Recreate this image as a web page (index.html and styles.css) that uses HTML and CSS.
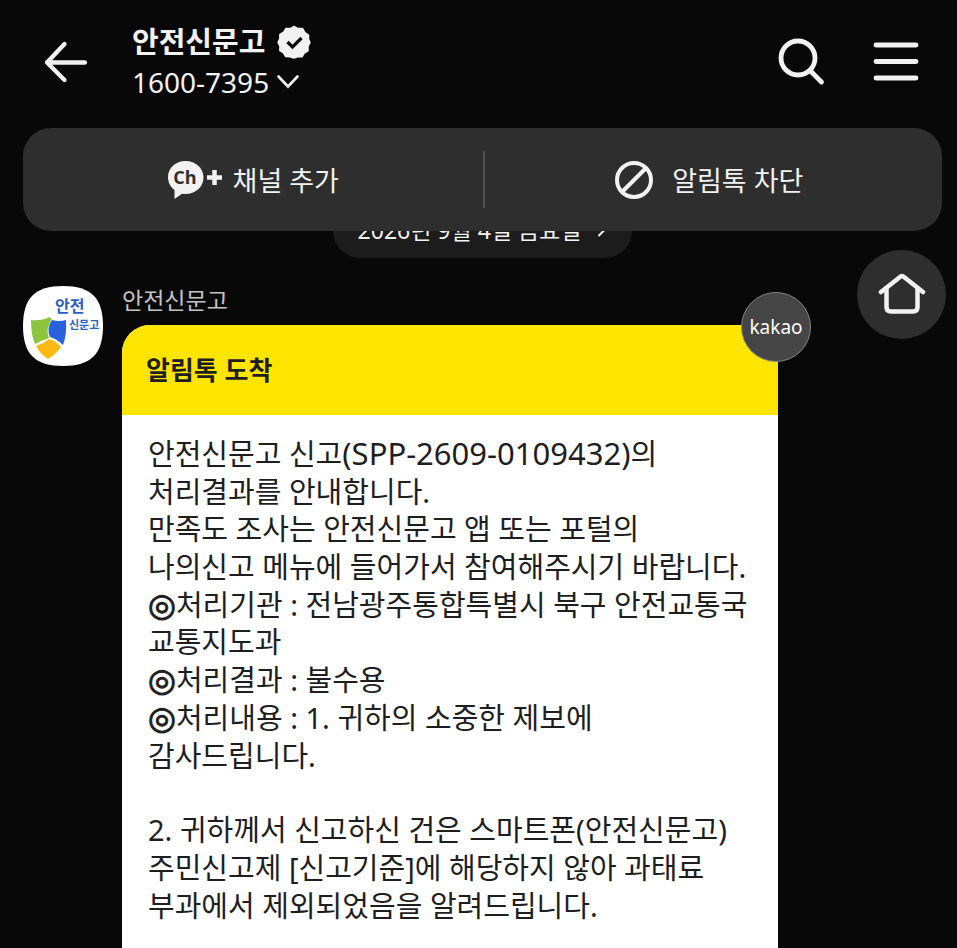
FILE: index.html
```html
<!DOCTYPE html>
<html lang="ko">
<head>
  <meta charset="UTF-8" />
  <meta name="viewport" content="width=device-width, initial-scale=1.0" />
  <title>안전신문고</title>
  <link rel="stylesheet" href="styles.css">
</head>
<body>
  <header class="topbar">
    <button type="button" class="icon-btn" aria-label="뒤로">
      <svg width="44" height="44" viewBox="0 0 44 44" fill="none" stroke="currentColor" stroke-width="4.300" stroke-linecap="round" stroke-linejoin="round">
        <path d="M20.500 4L3 22.500L20.500 40M3 22.500H41" />
      </svg>
    </button>
    <div class="channel">
      <h1>안전신문고
        <svg width="34" height="34" viewBox="0 0 34 34">
          <path d="M17 1.500L21 3.600L25.600 3.600L27.900 7.600L31.500 10L31.500 14.200L33 17.500L31 21.500L31 25.800L27.200 28.200L25 31.800L20.500 31.700L17 33L13 31.700L8.700 31.500L6.500 27.800L2.800 25.500L3 21.200L1 17.500L2.800 13.700L2.900 9.500L6.700 7.200L9 3.500L13.400 3.600Z" fill="currentColor" stroke="currentColor" stroke-width="1.500" stroke-linejoin="round" />
          <path d="M10.500 17L15.500 22L24.500 13" fill="none" stroke="#0a0a0a" stroke-width="3.200" />
        </svg>
      </h1>
      <button type="button" class="phone">1600-7395
        <svg width="22" height="14" viewBox="0 0 22 14" fill="none" stroke="currentColor" stroke-width="2.600" stroke-linecap="round">
          <path d="M1.500 1.500L11 11.500L20.500 1.500" />
        </svg>
      </button>
    </div>
    <div class="tools">
      <button type="button" class="icon-btn" aria-label="검색">
        <svg width="48" height="48" viewBox="0 0 48 48" fill="none" stroke="currentColor" stroke-width="4.800" stroke-linecap="round">
          <circle cx="20" cy="20" r="17" />
          <path d="M32 32.500L43.500 44" />
        </svg>
      </button>
      <button type="button" class="icon-btn" aria-label="메뉴">
        <svg width="46" height="40" viewBox="0 0 46 40" stroke="currentColor" stroke-width="4.800" stroke-linecap="round">
          <path d="M3 3H43M3 19.500H43M3 36H43" />
        </svg>
      </button>
    </div>
  </header>

  <div class="actions">
    <button type="button" class="action add">
      <svg width="56" height="38" viewBox="0 0 56 38">
        <path d="M18.500 0C8.500 0 1 7 1 16C1 21.500 3.500 26 7.500 29V38L15 32.700Q16.700 33 18.500 33C28.500 33 36.500 26 36.500 16.500S28.500 0 18.500 0Z" fill="currentColor" />
        <text x="18" y="23" text-anchor="middle" class="ch">Ch</text>
        <path d="M47.500 9V24M40 16.500H55" stroke="currentColor" stroke-width="4.500" />
      </svg>
      채널 추가
    </button>
    <button type="button" class="action block">
      <svg width="38" height="38" viewBox="0 0 38 38" fill="none" stroke="currentColor" stroke-width="4">
        <circle cx="19" cy="19" r="17" />
        <path d="M7 31L31 7" />
      </svg>
      알림톡 차단
    </button>
  </div>

  <main class="chat">
    <button type="button" class="date">2026년 9월 4일 금요일
      <svg width="10" height="16" viewBox="0 0 10 16" fill="none" stroke="currentColor" stroke-width="2">
        <path d="M1.500 1L8.500 8L1.500 15" />
      </svg>
    </button>

    <article class="message">
      <svg class="avatar" width="80" height="80" viewBox="0 0 80 80" role="img" aria-label="안전신문고">
        <path d="M40 0C68 0 80 12 80 40S68 80 40 80S0 68 0 40S12 0 40 0Z" fill="#fff" />
        <text x="32" y="26" class="logo-big">안전</text>
        <text x="46" y="43" class="logo-small">신문고</text>
        <path d="M8 34Q19 35 26 31L29 33Q22 43 26 52Q20 54 12 58Q8 49 8 34Z" fill="#8bc53f" />
        <path d="M29 34Q36 36 43 34Q44 49 40 59Q34 53 27 51Q23 42 29 34Z" fill="#2962dd" />
        <path d="M13 60Q20 58 26 53Q32 54 38 61Q33 68 25 73Q17 68 13 60Z" fill="#fdb913" />
      </svg>
      <div class="content">
        <p class="sender">안전신문고</p>
        <section class="card">
          <span class="badge">kakao</span>
          <h2>알림톡 도착</h2>
          <div class="text">
            <p>안전신문고 신고<span class="code">(SPP-2609-0109432)</span>의<br>
              처리결과를 안내합니다.<br>
              만족도 조사는 안전신문고 앱 또는 포털의<br>
              나의신고 메뉴에 들어가서 참여해주시기 바랍니다.<br>
              <span class="mark">◎</span>처리기관 : 전남광주통합특별시 북구 안전교통국<br>
              교통지도과<br>
              <span class="mark">◎</span>처리결과 : 불수용<br>
              <span class="mark">◎</span>처리내용 : 1. 귀하의 소중한 제보에<br>
              감사드립니다.</p>
            <p>2. 귀하께서 신고하신 건은 스마트폰(안전신문고)<br>
              주민신고제 [신고기준]에 해당하지 않아 과태료<br>
              부과에서 제외되었음을 알려드립니다.</p>
          </div>
        </section>
      </div>
    </article>
  </main>

  <a href="#" class="home" aria-label="채널 홈">
    <svg width="48" height="44" viewBox="0 0 48 44" fill="none" stroke="currentColor" stroke-width="4.500" stroke-linecap="round" stroke-linejoin="round">
      <path d="M3 19L22 4Q24 2 26 4L45 19" />
      <path d="M8.500 16V34Q8.500 38.500 13 38.500H35Q39.500 38.500 39.500 34V16" />
    </svg>
  </a>
</body>
</html>
```

FILE: styles.css
```css
* {
  box-sizing: border-box;
}
body {
  margin: 0;
  min-height: 100vh;
  background: #080808;
  color: #f2f2f2;
  font-family: "Noto Sans", "Noto Sans CJK KR", sans-serif;
  overflow: hidden;
}
h1, h2, p {
  margin: 0;
}
button {
  padding: 0;
  border: 0;
  background: none;
  color: inherit;
  font: inherit;
  cursor: pointer;
}
svg {
  display: block;
  flex-shrink: 0;
}

/* top bar */
.topbar {
  display: flex;
  align-items: center;
  height: 128px;
  padding: 0 38px 4px 44px;
}
.channel {
  margin-left: 44px;
}
.channel h1 {
  display: flex;
  align-items: center;
  gap: 12px;
  font-size: 29px;
  font-weight: 700;
  line-height: 40px;
}
.phone {
  display: flex;
  align-items: center;
  gap: 8px;
  font-size: 28px;
  line-height: 40px;
}
.tools {
  display: flex;
  align-items: center;
  gap: 47px;
  margin-left: auto;
}

/* channel actions */
.actions {
  position: relative;
  z-index: 1;
  display: flex;
  height: 103px;
  margin: 0 15px 0 23px;
  background: #2e2e2e;
  border-radius: 28px;
}
.action {
  display: flex;
  width: 50%;
  align-items: center;
  justify-content: center;
  font-size: 27px;
}
.add {
  gap: 10px;
}
.block {
  gap: 19px;
  padding-right: 8px;
}
.block::before {
  content: "";
  width: 2px;
  height: 57px;
  margin-right: auto;
  background: #505050;
}
.block::after {
  content: "";
  margin-left: auto;
}
.ch {
  fill: #2e2e2e;
  font-family: "Open Sans", sans-serif;
  font-size: 18px;
  font-weight: 700;
}

/* conversation */
.chat {
  margin-top: -28px;
  padding: 0 15px 0 23px;
}
.date {
  display: flex;
  align-items: center;
  gap: 16px;
  height: 55px;
  margin: 0 auto;
  padding: 0 25px 4px;
  background: #1c1c1c;
  border-radius: 27px;
  font-size: 23px;
}
.message {
  display: flex;
  align-items: flex-start;
  gap: 19px;
  margin-top: 28px;
  padding-right: 164px;
}
.content {
  flex: 1;
}
.sender {
  color: #c4c4c4;
  font-size: 23px;
  line-height: 28px;
}
.card {
  position: relative;
  margin-top: 11px;
  background: #fff;
  border-radius: 28px 0 0 0;
  color: #1e1e1e;
}
.card h2 {
  padding: 0 24px;
  background: #fee500;
  border-radius: 28px 0 0 0;
  font-size: 26px;
  font-weight: 700;
  line-height: 90px;
}
.badge {
  position: absolute;
  top: -33px;
  right: -33px;
  width: 70px;
  height: 70px;
  background: #454545;
  border: 1px solid #858585;
  border-radius: 50%;
  color: #fff;
  font-size: 19px;
  line-height: 68px;
  text-align: center;
}
.text {
  padding: 20px 24px 32px 26px;
  font-size: 29px;
  line-height: 1.3;
  white-space: nowrap;
}
.text p + p {
  margin-top: 37px;
}
.code {
  font-size: 31px;
  line-height: 1;
}
.mark {
  font-family: "DejaVu Sans", sans-serif;
  font-size: 32px;
  line-height: 1;
  -webkit-text-stroke: 1px;
}

.logo-big, .logo-small {
  fill: #2b5fc0;
  font-family: "Noto Sans CJK KR", sans-serif;
  font-weight: 700;
}
.logo-big {
  font-size: 16px;
}
.logo-small {
  font-size: 11px;
}

/* floating home button */
.home {
  position: fixed;
  top: 250px;
  right: 11px;
  display: flex;
  align-items: center;
  justify-content: center;
  width: 89px;
  height: 89px;
  background: #2e2e2e;
  border-radius: 50%;
  color: #f2f2f2;
}
```
